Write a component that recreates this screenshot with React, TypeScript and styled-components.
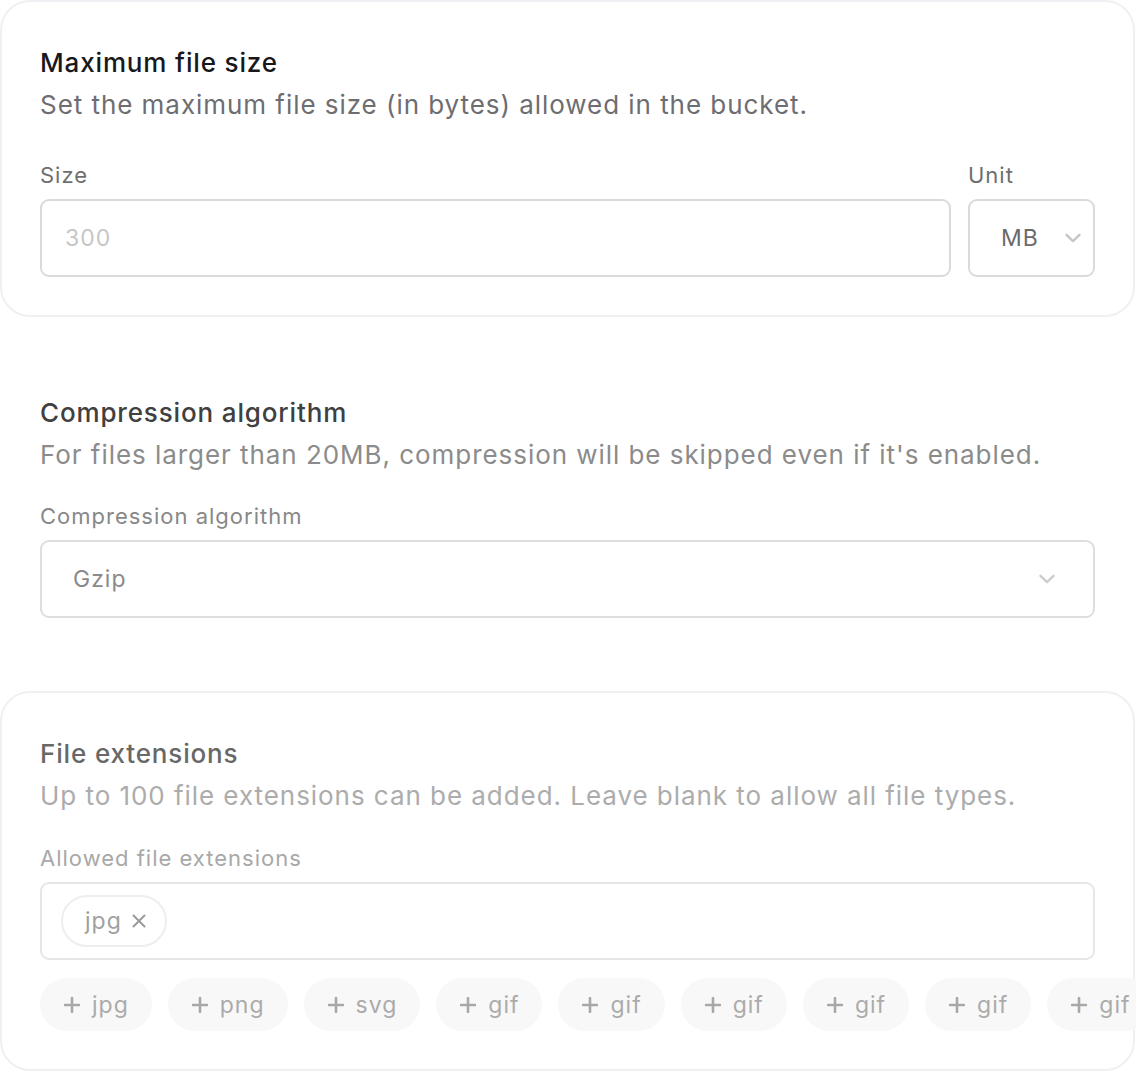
import styled, { createGlobalStyle } from "styled-components";

const GlobalStyle = createGlobalStyle`
	html, body {
		margin: 0;
		padding: 0;
		background: #ffffff;
		overflow: hidden;
	}
	body {
		font-family: Inter, "Noto Sans", sans-serif;
		letter-spacing: 1px;
		-webkit-font-smoothing: antialiased;
	}
`;

interface Tone {
	title: string;
	desc: string;
	label: string;
	value: string;
	field: string;
}

const tones: Record<string, Tone> = {
	strong: { title: "#18181b", desc: "#6d6d72", label: "#6e6e6e", value: "#6b6b6b", field: "#dadada" },
	mid: { title: "#404040", desc: "#8b8b8b", label: "#888888", value: "#8a8a8a", field: "#dedede" },
	soft: { title: "#686868", desc: "#acacac", label: "#a8a8a8", value: "#a0a0a0", field: "#e6e6e6" },
};

const ChevronIcon = ({ color }: { color: string }) => (
	<svg width="16" height="10" viewBox="0 0 16 10" fill="none">
		<path d="M1.5 1.8 8 8.2l6.5-6.4" stroke={color} strokeWidth="2.4" strokeLinecap="round" strokeLinejoin="round" />
	</svg>
);

const CloseIcon = () => (
	<svg width="14" height="14" viewBox="0 0 14 14" fill="none">
		<path d="M1.5 1.5l11 11M12.5 1.5l-11 11" stroke="#9a9a9a" strokeWidth="2" strokeLinecap="round" />
	</svg>
);

const PlusIcon = () => (
	<svg width="16" height="16" viewBox="0 0 16 16" fill="none">
		<path d="M8 1v14M1 8h14" stroke="#a8a8a8" strokeWidth="2.6" strokeLinecap="round" />
	</svg>
);

const suggestions = ["jpg", "png", "svg", "gif", "gif", "gif", "gif", "gif", "gif"];

const App = () => {
	return (
		<>
			<GlobalStyle />
			<Page>
				<Card>
					<CardHeader>
						<Title $color={tones.strong.title}>Maximum file size</Title>
						<Description $color={tones.strong.desc}>
							Set the maximum file size (in bytes) allowed in the bucket.
						</Description>
					</CardHeader>
					<SizeRow $top={34}>
						<Field>
							<Label $color={tones.strong.label}>Size</Label>
							<TextInput $border={tones.strong.field}>
								<Placeholder>300</Placeholder>
							</TextInput>
						</Field>
						<Field>
							<Label $color={tones.strong.label}>Unit</Label>
							<UnitSelect $border={tones.strong.field}>
								<Value $color={tones.strong.value}>MB</Value>
								<ChevronIcon color="#c6c6c6" />
							</UnitSelect>
						</Field>
					</SizeRow>
				</Card>

				<Card $borderless>
					<CardHeader>
						<Title $color={tones.mid.title}>Compression algorithm</Title>
						<Description $color={tones.mid.desc}>
							For files larger than 20MB, compression will be skipped even if it's enabled.
						</Description>
					</CardHeader>
					<Field $top={25}>
						<Label $color={tones.mid.label}>Compression algorithm</Label>
						<WideSelect $border={tones.mid.field}>
							<Value $color={tones.mid.value}>Gzip</Value>
							<ChevronIcon color="#cdcdcd" />
						</WideSelect>
					</Field>
				</Card>

				<Card>
					<CardHeader>
						<Title $color={tones.soft.title}>File extensions</Title>
						<Description $color={tones.soft.desc}>
							Up to 100 file extensions can be added. Leave blank to allow all file types.
						</Description>
					</CardHeader>
					<Field $top={26}>
						<Label $color={tones.soft.label}>Allowed file extensions</Label>
						<TagInput $border={tones.soft.field}>
							<Tag>
								jpg
								<CloseIcon />
							</Tag>
						</TagInput>
					</Field>
					<SuggestionRow>
						{suggestions.map((ext, i) => (
							<Suggestion key={i}>
								<PlusIcon />
								{ext}
							</Suggestion>
						))}
					</SuggestionRow>
				</Card>
			</Page>
		</>
	);
};

export default App;

const Page = styled.div`
	width: 1135px;
	display: flex;
	flex-direction: column;
	gap: 33px;
`;

const Card = styled.section<{ $borderless?: boolean }>`
	box-sizing: border-box;
	width: 100%;
	padding: 40px 38px 38px;
	border: 2px solid ${(p) => (p.$borderless ? "transparent" : "#f0f0f4")};
	border-radius: 30px;
	background: #ffffff;
	display: flex;
	flex-direction: column;
`;

const CardHeader = styled.div`
	display: flex;
	flex-direction: column;
`;

const Title = styled.h2<{ $color: string }>`
	margin: 0;
	font-size: 26px;
	line-height: 42px;
	font-weight: 500;
	letter-spacing: 0.85px;
	color: ${(p) => p.$color};
`;

const Description = styled.p<{ $color: string }>`
	margin: 0;
	font-size: 26px;
	line-height: 42px;
	font-weight: 400;
	letter-spacing: 0.95px;
	color: ${(p) => p.$color};
`;

const SizeRow = styled.div<{ $top: number }>`
	margin-top: ${(p) => p.$top}px;
	display: grid;
	grid-template-columns: 1fr 127px;
	gap: 17px;
`;

const Field = styled.div<{ $top?: number }>`
	margin-top: ${(p) => p.$top ?? 0}px;
	display: flex;
	flex-direction: column;
	gap: 9px;
	min-width: 0;
`;

const Label = styled.label<{ $color: string }>`
	font-size: 22px;
	line-height: 30px;
	color: ${(p) => p.$color};
`;

const FieldBox = styled.div<{ $border: string }>`
	box-sizing: border-box;
	height: 78px;
	border: 2px solid ${(p) => p.$border};
	border-radius: 9px;
	display: flex;
	align-items: center;
	background: #ffffff;
`;

const TextInput = styled(FieldBox)`
	padding: 0 23px;
`;

const Placeholder = styled.span`
	font-size: 23px;
	color: #c6c6c6;
`;

const UnitSelect = styled(FieldBox)`
	justify-content: space-between;
	padding: 0 12px 0 31px;
`;

const WideSelect = styled(FieldBox)`
	justify-content: space-between;
	padding: 0 38px 0 31px;
`;

const Value = styled.span<{ $color: string }>`
	font-size: 23px;
	color: ${(p) => p.$color};
`;

const TagInput = styled(FieldBox)`
	padding: 0 19px;
`;

const Tag = styled.span`
	box-sizing: border-box;
	height: 52px;
	display: inline-flex;
	align-items: center;
	gap: 10px;
	padding: 0 19px 0 22px;
	border: 2px solid #eeeeee;
	border-radius: 26px;
	font-size: 23px;
	color: #a0a0a0;
`;

const SuggestionRow = styled.div`
	margin-top: 18px;
	display: flex;
	gap: 16px;
	flex-wrap: nowrap;
`;

const Suggestion = styled.span`
	flex-shrink: 0;
	box-sizing: border-box;
	height: 53px;
	display: inline-flex;
	align-items: center;
	gap: 12px;
	padding: 0 23px 0 24px;
	border-radius: 27px;
	background: #f8f8f8;
	font-size: 23px;
	color: #ababab;
`;
